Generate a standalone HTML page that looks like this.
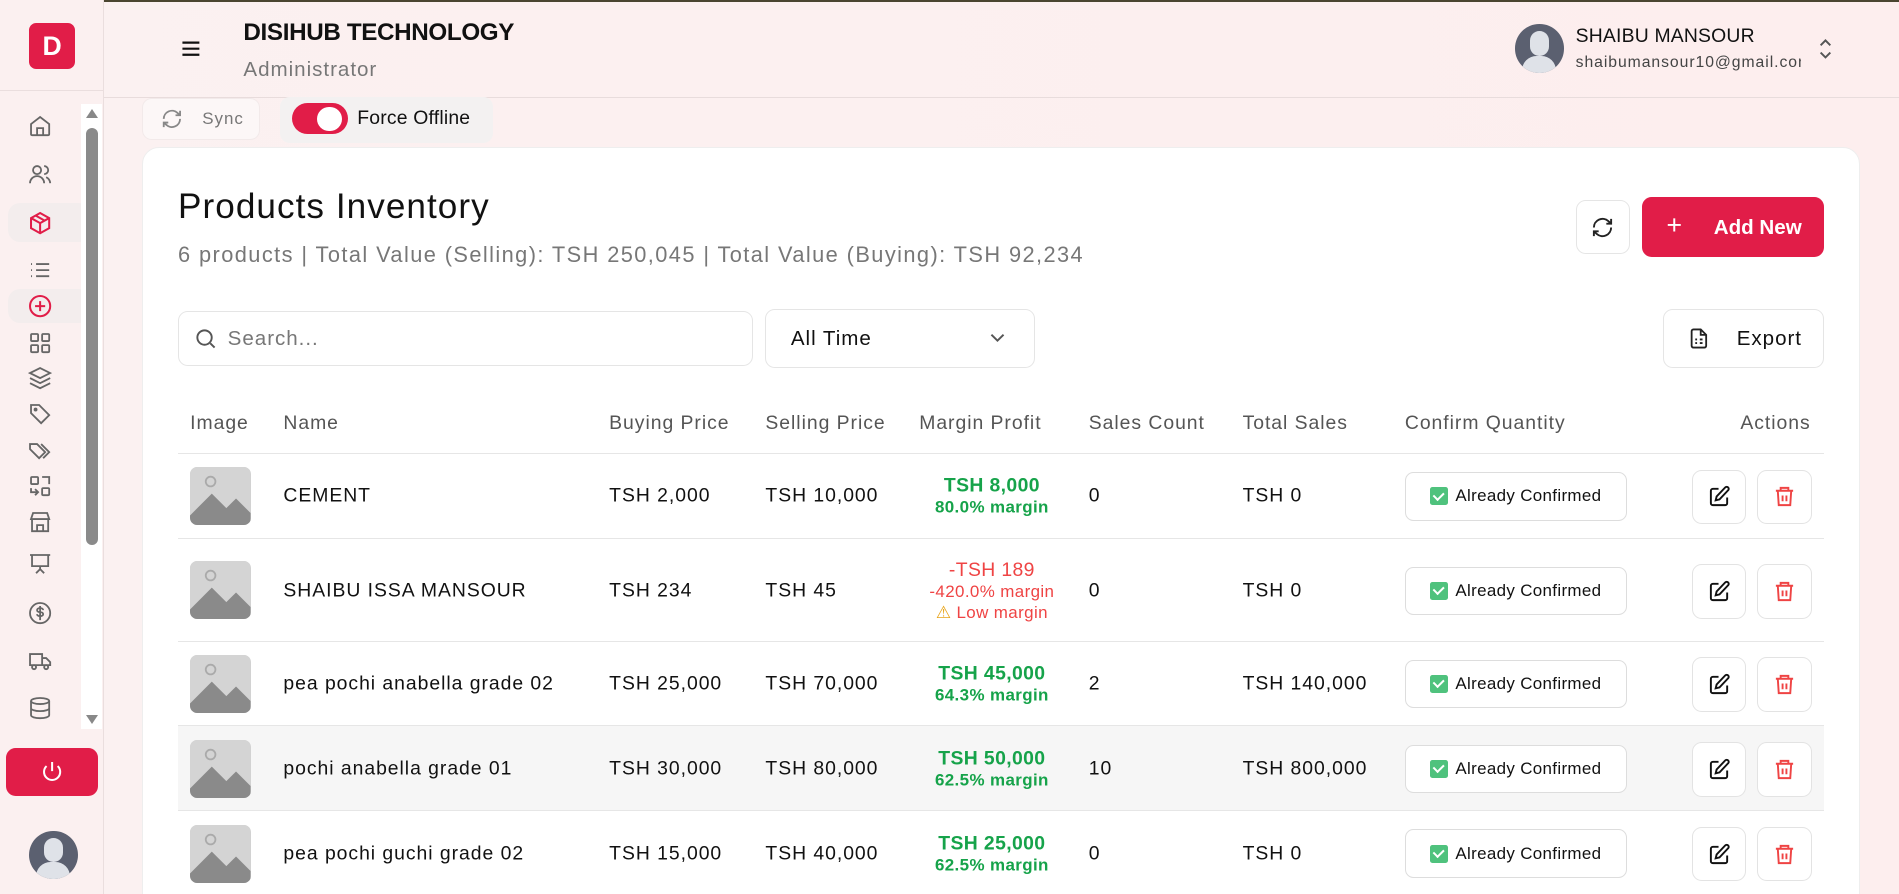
<!DOCTYPE html>
<html><head><meta charset="utf-8"><style>
*{box-sizing:border-box;margin:0;padding:0}
html,body{width:1899px;height:894px;overflow:hidden}
body{font-family:"Liberation Sans",sans-serif;color:#111;background:#fdf3f3;letter-spacing:0.05em}
#r{zoom:1.21110;width:1568px;height:738px;position:relative;overflow:hidden;background:linear-gradient(90deg,#fbf1f1,#fdeeee)}
.a{position:absolute}
.sb{left:0;top:0;width:86px;height:738px;border-right:1px solid #eadede;background:#fbf0f0}
.ic{position:absolute;left:23px;width:20px;height:20px}
svg{display:block}
.btn{position:absolute;background:#fff;border:1px solid #e5e5e5;border-radius:8px}
.th{position:absolute;top:340px;font-size:16px;color:#555}
.row{position:absolute;left:147px;width:1359px;border-top:1px solid #e6e6e6}
.c{position:absolute;font-size:16px;color:#111;transform:translateY(-50%)}
.img{position:absolute;left:10px;width:50px;height:48px;border-radius:6px;background:#d0d0d0;overflow:hidden}
.mg{position:absolute;left:560px;width:224px;text-align:center;transform:translateY(-50%);font-weight:bold;letter-spacing:0.02em}
.conf{position:absolute;left:1013px;width:183px;height:40px;border:1px solid #ddd;border-radius:7px;font-size:14px;display:flex;align-items:center;justify-content:center;gap:6px;background:#fff;letter-spacing:0.02em}
.ck{width:15px;height:15px;background:#4fc27d;border-radius:2px;position:relative}
.ck:after{content:"";position:absolute;left:4px;top:2px;width:4px;height:7px;border:solid #fff;border-width:0 2px 2px 0;transform:rotate(45deg)}
.ab{position:absolute;width:45px;height:45px;border:1px solid #e3e3e3;border-radius:8px;background:#fff;display:flex;align-items:center;justify-content:center}
</style></head><body><div id="r">
<div class="a" style="left:0;top:0;width:1568px;height:2px;background:#4a4530"></div>
<div class="a" style="left:86px;top:80px;width:1482px;height:1px;background:#e8dcdc"></div>
<div class="a sb">
<div class="a" style="left:24px;top:19px;width:38px;height:38px;background:#e11d48;border-radius:6px;color:#fff;font-weight:bold;font-size:22px;text-align:center;line-height:38px;letter-spacing:0">D</div>
<div class="a" style="left:0;top:74px;width:86px;height:1px;background:#eadede"></div>
<div class="a" style="left:7px;top:168px;width:68px;height:32px;background:#f3eded;border-radius:10px"></div>
<div class="a" style="left:7px;top:239px;width:68px;height:28px;background:#f3eded;border-radius:10px"></div>
<svg class="ic" style="top:94px" viewBox="0 0 24 24" fill="none" stroke="#666" stroke-width="1.8"><path d="M3 10l9-7 9 7v10a1 1 0 0 1-1 1H4a1 1 0 0 1-1-1z M9 21v-7h6v7"/></svg>
<svg class="ic" style="top:134px" viewBox="0 0 24 24" fill="none" stroke="#666" stroke-width="1.8"><circle cx="9" cy="8" r="4"/><path d="M2 21a7 7 0 0 1 14 0M16 4a4 4 0 0 1 0 8M22 21a7 7 0 0 0-4-6"/></svg>
<svg class="ic" style="top:174px" viewBox="0 0 24 24" fill="none" stroke="#e11d48" stroke-width="2"><path d="M12 2l9 5v10l-9 5-9-5V7z M3 7l9 5 9-5 M12 12v10 M7.5 4.5l9 5"/></svg>
<svg class="ic" style="top:213px" viewBox="0 0 24 24" fill="none" stroke="#666" stroke-width="1.8"><path d="M8 6h13M8 12h13M8 18h13M3 6h1M3 12h1M3 18h1"/></svg>
<svg class="ic" style="top:243px" viewBox="0 0 24 24" fill="none" stroke="#e11d48" stroke-width="2"><circle cx="12" cy="12" r="10"/><path d="M12 7v10M7 12h10"/></svg>
<svg class="ic" style="top:273px" viewBox="0 0 24 24" fill="none" stroke="#666" stroke-width="1.8"><rect x="3" y="3" width="7" height="7" rx="1"/><rect x="14" y="3" width="7" height="7" rx="1"/><rect x="3" y="14" width="7" height="7" rx="1"/><rect x="14" y="14" width="7" height="7" rx="1"/></svg>
<svg class="ic" style="top:302px" viewBox="0 0 24 24" fill="none" stroke="#666" stroke-width="1.8"><path d="M12 2l10 5-10 5L2 7z M2 12l10 5 10-5 M2 17l10 5 10-5"/></svg>
<svg class="ic" style="top:332px" viewBox="0 0 24 24" fill="none" stroke="#666" stroke-width="1.8"><path d="M3 3h8l10 10-8 8L3 11z"/><circle cx="7.5" cy="7.5" r="1"/></svg>
<svg class="ic" style="top:362px" viewBox="0 0 24 24" fill="none" stroke="#666" stroke-width="1.8"><path d="M2 6h7l8 8-6 6-9-9z M13 6l8 8-6 6"/></svg>
<svg class="ic" style="top:391px" viewBox="0 0 24 24" fill="none" stroke="#666" stroke-width="1.8"><rect x="3" y="3" width="7" height="7" rx="1"/><rect x="14" y="14" width="7" height="7" rx="1"/><path d="M14 3h7v7M3 14v4h7M7 21l3-3-3-3"/></svg>
<svg class="ic" style="top:421px" viewBox="0 0 24 24" fill="none" stroke="#666" stroke-width="1.8"><path d="M3 9l2-6h14l2 6z M4 9v12h16V9 M9 21v-6h6v6"/></svg>
<svg class="ic" style="top:456px" viewBox="0 0 24 24" fill="none" stroke="#666" stroke-width="1.8"><path d="M2 3h20M4 3v11h16V3M12 14v3M8 21l4-4 4 4"/></svg>
<svg class="ic" style="top:496px" viewBox="0 0 24 24" fill="none" stroke="#666" stroke-width="1.8"><circle cx="12" cy="12" r="10"/><path d="M15 9c0-1-1-2-3-2s-3 1-3 2 1 2 3 2 3 1 3 2-1 2-3 2-3-1-3-2M12 5v14"/></svg>
<svg class="ic" style="top:536px" viewBox="0 0 24 24" fill="none" stroke="#666" stroke-width="1.8"><path d="M2 5h12v11H2z M14 9h4l4 4v3h-8"/><circle cx="6" cy="18" r="2"/><circle cx="18" cy="18" r="2"/></svg>
<svg class="ic" style="top:575px" viewBox="0 0 24 24" fill="none" stroke="#666" stroke-width="1.8"><ellipse cx="12" cy="5" rx="9" ry="3"/><path d="M3 5v14c0 1.7 4 3 9 3s9-1.3 9-3V5M3 12c0 1.7 4 3 9 3s9-1.3 9-3"/></svg>
<div class="a" style="left:67px;top:86px;width:17px;height:516px;background:#fff"></div>
<div class="a" style="left:71px;top:90px;width:0;height:0;border-left:5px solid transparent;border-right:5px solid transparent;border-bottom:8px solid #888"></div>
<div class="a" style="left:71px;top:590px;width:0;height:0;border-left:5px solid transparent;border-right:5px solid transparent;border-top:8px solid #888"></div>
<div class="a" style="left:71px;top:106px;width:10px;height:344px;background:#8a8a8a;border-radius:5px"></div>
<div class="a" style="left:5px;top:618px;width:76px;height:39px;background:#e11d48;border-radius:8px"></div>
<svg class="a" style="left:33px;top:627px" width="20" height="20" viewBox="0 0 24 24" fill="none" stroke="#fff" stroke-width="2"><path d="M12 3v9M6.5 7a8 8 0 1 0 11 0"/></svg>
<div class="a" style="left:24px;top:686px;width:40px;height:40px;border-radius:50%;background:#5b6070;overflow:hidden"><div class="a" style="left:12px;top:6px;width:16px;height:20px;border-radius:8px;background:#dfe2e8"></div><div class="a" style="left:6px;top:26px;width:28px;height:20px;border-radius:12px 12px 0 0;background:#dfe2e8"></div></div>
</div>
<svg class="a" style="left:149px;top:32px" width="18" height="16" viewBox="0 0 18 16" stroke="#111" stroke-width="1.8"><path d="M2 3h14M2 8h14M2 13h14"/></svg>
<div class="a" style="left:201px;top:16px;font-size:20px;font-weight:bold;letter-spacing:-0.3px">DISIHUB TECHNOLOGY</div>
<div class="a" style="left:201px;top:48px;font-size:17px;color:#777">Administrator</div>
<div class="a" style="left:1251px;top:20px;width:40px;height:40px;border-radius:50%;background:#5b6070;overflow:hidden"><div class="a" style="left:12px;top:6px;width:16px;height:20px;border-radius:8px;background:#dfe2e8"></div><div class="a" style="left:6px;top:26px;width:28px;height:20px;border-radius:12px 12px 0 0;background:#dfe2e8"></div></div>
<div class="a" style="left:1301px;top:21px;font-size:16px;letter-spacing:0.01em">SHAIBU MANSOUR</div>
<div class="a" style="left:1301px;top:45px;font-size:13px;color:#444;width:186px;overflow:hidden;white-space:nowrap;letter-spacing:0.06em">shaibumansour10@gmail.com</div>
<svg class="a" style="left:1500px;top:31px" width="14" height="18" viewBox="0 0 14 18" fill="none" stroke="#555" stroke-width="1.6"><path d="M3 6l4-4 4 4M3 12l4 4 4-4"/></svg>
<div class="a" style="left:117px;top:81px;width:98px;height:35px;background:#fcf7f7;border-radius:8px;border:1px solid #f2eaea"></div>
<svg class="a" style="left:133px;top:89px" width="18" height="18" viewBox="0 0 24 24" fill="none" stroke="#888" stroke-width="2"><path d="M21 12a9 9 0 0 1-15 6.7L3 16M3 12a9 9 0 0 1 15-6.7L21 8M21 3v5h-5M3 21v-5h5"/></svg>
<div class="a" style="left:167px;top:90px;font-size:14px;color:#777">Sync</div>
<div class="a" style="left:231px;top:80px;width:176px;height:38px;background:#f3f1f1;border-radius:8px"></div>
<div class="a" style="left:241px;top:85px;width:46px;height:26px;background:#e11d48;border-radius:13px"><div class="a" style="left:21px;top:3px;width:20px;height:20px;border-radius:50%;background:#fff"></div></div>
<div class="a" style="left:295px;top:88px;font-size:16px;letter-spacing:0.01em">Force Offline</div>
<div class="a" style="left:117px;top:121px;width:1419px;height:640px;background:#fff;border-radius:14px;border:1px solid #eee"></div>
<div class="a" style="left:147px;top:154px;font-size:29px;letter-spacing:0.03em">Products Inventory</div>
<div class="a" style="left:147px;top:200px;font-size:18px;color:#777;letter-spacing:0.065em">6 products | Total Value (Selling): TSH 250,045 | Total Value (Buying): TSH 92,234</div>
<div class="btn" style="left:1301px;top:165px;width:45px;height:45px"></div>
<svg class="a" style="left:1314px;top:178px" width="19" height="19" viewBox="0 0 24 24" fill="none" stroke="#222" stroke-width="2"><path d="M21 12a9 9 0 0 1-15 6.7L3 16M3 12a9 9 0 0 1 15-6.7L21 8M21 3v5h-5M3 21v-5h5"/></svg>
<div class="a" style="left:1356px;top:163px;width:150px;height:49px;background:#e11d48;border-radius:8px;color:#fff;font-size:17px;font-weight:bold;letter-spacing:0"><span class="a" style="left:20px;top:10px;font-size:22px;font-weight:normal">+</span><span class="a" style="left:59px;top:15px">Add New</span></div>
<div class="btn" style="left:147px;top:257px;width:475px;height:45px"></div>
<svg class="a" style="left:160px;top:270px" width="19" height="19" viewBox="0 0 24 24" fill="none" stroke="#555" stroke-width="2"><circle cx="11" cy="11" r="7.5"/><path d="M17 17l4.5 4.5"/></svg>
<div class="a" style="left:188px;top:270px;font-size:17px;color:#777">Search...</div>
<div class="btn" style="left:632px;top:255px;width:223px;height:49px"></div>
<div class="a" style="left:653px;top:270px;font-size:17px">All Time</div>
<svg class="a" style="left:817px;top:273px" width="14" height="10" viewBox="0 0 14 10" fill="none" stroke="#555" stroke-width="1.6"><path d="M2 3l5 5 5-5"/></svg>
<div class="btn" style="left:1373px;top:255px;width:133px;height:49px"></div>
<svg class="a" style="left:1394px;top:270px" width="18" height="19" viewBox="0 0 24 24" fill="none" stroke="#222" stroke-width="2"><path d="M14 2H6a2 2 0 0 0-2 2v16a2 2 0 0 0 2 2h12a2 2 0 0 0 2-2V8z M14 2v6h6 M8 13h2M8 17h2M13 13h3M13 17h3"/></svg>
<div class="a" style="left:1434px;top:270px;font-size:17px">Export</div>
<div class="th" style="left:157px">Image</div><div class="th" style="left:234px">Name</div><div class="th" style="left:503px">Buying Price</div><div class="th" style="left:632px">Selling Price</div><div class="th" style="left:759px">Margin Profit</div><div class="th" style="left:899px">Sales Count</div><div class="th" style="left:1026px">Total Sales</div><div class="th" style="left:1160px">Confirm Quantity</div><div class="th" style="left:1437px">Actions</div>

<div class="row" style="top:374px;height:70px">
<div class="img" style="top:11px"><svg width="50" height="48" viewBox="0 0 50 48"><rect width="50" height="48" fill="#d4d4d4"/><circle cx="17" cy="12" r="4" fill="none" stroke="#aaa" stroke-width="1.5"/><path d="M0 40l18-18 12 12 8-8 12 12v10H0z" fill="#8a8a8a"/></svg></div>
<div class="c" style="left:87px;top:35px">CEMENT</div><div class="c" style="left:356px;top:35px">TSH 2,000</div><div class="c" style="left:485px;top:35px">TSH 10,000</div>
<div class="mg" style="top:35px;color:#16a34a"><div style="font-size:16px">TSH 8,000</div><div style="font-size:14px">80.0% margin</div></div>
<div class="c" style="left:752px;top:35px">0</div><div class="c" style="left:879px;top:35px">TSH 0</div>
<div class="conf" style="top:15px"><div class="ck"></div>Already Confirmed</div>
<div class="ab" style="left:1250px;top:13px"><svg width="19" height="19" viewBox="0 0 24 24" fill="none" stroke="#111" stroke-width="2"><path d="M11 4H5a2 2 0 0 0-2 2v13a2 2 0 0 0 2 2h13a2 2 0 0 0 2-2v-6M18 2.5a2.1 2.1 0 0 1 3 3L12 15l-4 1 1-4z"/></svg></div>
<div class="ab" style="left:1304px;top:13px"><svg width="19" height="19" viewBox="0 0 24 24" fill="none" stroke="#ef4444" stroke-width="2"><path d="M3 6h18M8 6V3h8v3M5 6l1 15h12l1-15M10 11v6M14 11v6"/></svg></div>
</div>
<div class="row" style="top:444px;height:85px">
<div class="img" style="top:18px"><svg width="50" height="48" viewBox="0 0 50 48"><rect width="50" height="48" fill="#d4d4d4"/><circle cx="17" cy="12" r="4" fill="none" stroke="#aaa" stroke-width="1.5"/><path d="M0 40l18-18 12 12 8-8 12 12v10H0z" fill="#8a8a8a"/></svg></div>
<div class="c" style="left:87px;top:43px">SHAIBU ISSA MANSOUR</div><div class="c" style="left:356px;top:43px">TSH 234</div><div class="c" style="left:485px;top:43px">TSH 45</div>
<div class="mg" style="top:43px;color:#ef4444"><div style="font-size:16px;font-weight:normal">-TSH 189</div><div style="font-size:14px;font-weight:normal">-420.0% margin</div><div style="font-size:14px;font-weight:normal"><span style="color:#e8a317">⚠</span> Low margin</div></div>
<div class="c" style="left:752px;top:43px">0</div><div class="c" style="left:879px;top:43px">TSH 0</div>
<div class="conf" style="top:23px"><div class="ck"></div>Already Confirmed</div>
<div class="ab" style="left:1250px;top:21px"><svg width="19" height="19" viewBox="0 0 24 24" fill="none" stroke="#111" stroke-width="2"><path d="M11 4H5a2 2 0 0 0-2 2v13a2 2 0 0 0 2 2h13a2 2 0 0 0 2-2v-6M18 2.5a2.1 2.1 0 0 1 3 3L12 15l-4 1 1-4z"/></svg></div>
<div class="ab" style="left:1304px;top:21px"><svg width="19" height="19" viewBox="0 0 24 24" fill="none" stroke="#ef4444" stroke-width="2"><path d="M3 6h18M8 6V3h8v3M5 6l1 15h12l1-15M10 11v6M14 11v6"/></svg></div>
</div>
<div class="row" style="top:529px;height:70px">
<div class="img" style="top:11px"><svg width="50" height="48" viewBox="0 0 50 48"><rect width="50" height="48" fill="#d4d4d4"/><circle cx="17" cy="12" r="4" fill="none" stroke="#aaa" stroke-width="1.5"/><path d="M0 40l18-18 12 12 8-8 12 12v10H0z" fill="#8a8a8a"/></svg></div>
<div class="c" style="left:87px;top:35px">pea pochi anabella grade 02</div><div class="c" style="left:356px;top:35px">TSH 25,000</div><div class="c" style="left:485px;top:35px">TSH 70,000</div>
<div class="mg" style="top:35px;color:#16a34a"><div style="font-size:16px">TSH 45,000</div><div style="font-size:14px">64.3% margin</div></div>
<div class="c" style="left:752px;top:35px">2</div><div class="c" style="left:879px;top:35px">TSH 140,000</div>
<div class="conf" style="top:15px"><div class="ck"></div>Already Confirmed</div>
<div class="ab" style="left:1250px;top:13px"><svg width="19" height="19" viewBox="0 0 24 24" fill="none" stroke="#111" stroke-width="2"><path d="M11 4H5a2 2 0 0 0-2 2v13a2 2 0 0 0 2 2h13a2 2 0 0 0 2-2v-6M18 2.5a2.1 2.1 0 0 1 3 3L12 15l-4 1 1-4z"/></svg></div>
<div class="ab" style="left:1304px;top:13px"><svg width="19" height="19" viewBox="0 0 24 24" fill="none" stroke="#ef4444" stroke-width="2"><path d="M3 6h18M8 6V3h8v3M5 6l1 15h12l1-15M10 11v6M14 11v6"/></svg></div>
</div>
<div class="row" style="top:599px;height:70px;background:#f6f6f6">
<div class="img" style="top:11px"><svg width="50" height="48" viewBox="0 0 50 48"><rect width="50" height="48" fill="#d4d4d4"/><circle cx="17" cy="12" r="4" fill="none" stroke="#aaa" stroke-width="1.5"/><path d="M0 40l18-18 12 12 8-8 12 12v10H0z" fill="#8a8a8a"/></svg></div>
<div class="c" style="left:87px;top:35px">pochi anabella grade 01</div><div class="c" style="left:356px;top:35px">TSH 30,000</div><div class="c" style="left:485px;top:35px">TSH 80,000</div>
<div class="mg" style="top:35px;color:#16a34a"><div style="font-size:16px">TSH 50,000</div><div style="font-size:14px">62.5% margin</div></div>
<div class="c" style="left:752px;top:35px">10</div><div class="c" style="left:879px;top:35px">TSH 800,000</div>
<div class="conf" style="top:15px"><div class="ck"></div>Already Confirmed</div>
<div class="ab" style="left:1250px;top:13px"><svg width="19" height="19" viewBox="0 0 24 24" fill="none" stroke="#111" stroke-width="2"><path d="M11 4H5a2 2 0 0 0-2 2v13a2 2 0 0 0 2 2h13a2 2 0 0 0 2-2v-6M18 2.5a2.1 2.1 0 0 1 3 3L12 15l-4 1 1-4z"/></svg></div>
<div class="ab" style="left:1304px;top:13px"><svg width="19" height="19" viewBox="0 0 24 24" fill="none" stroke="#ef4444" stroke-width="2"><path d="M3 6h18M8 6V3h8v3M5 6l1 15h12l1-15M10 11v6M14 11v6"/></svg></div>
</div>
<div class="row" style="top:669px;height:70px">
<div class="img" style="top:11px"><svg width="50" height="48" viewBox="0 0 50 48"><rect width="50" height="48" fill="#d4d4d4"/><circle cx="17" cy="12" r="4" fill="none" stroke="#aaa" stroke-width="1.5"/><path d="M0 40l18-18 12 12 8-8 12 12v10H0z" fill="#8a8a8a"/></svg></div>
<div class="c" style="left:87px;top:35px">pea pochi guchi grade 02</div><div class="c" style="left:356px;top:35px">TSH 15,000</div><div class="c" style="left:485px;top:35px">TSH 40,000</div>
<div class="mg" style="top:35px;color:#16a34a"><div style="font-size:16px">TSH 25,000</div><div style="font-size:14px">62.5% margin</div></div>
<div class="c" style="left:752px;top:35px">0</div><div class="c" style="left:879px;top:35px">TSH 0</div>
<div class="conf" style="top:15px"><div class="ck"></div>Already Confirmed</div>
<div class="ab" style="left:1250px;top:13px"><svg width="19" height="19" viewBox="0 0 24 24" fill="none" stroke="#111" stroke-width="2"><path d="M11 4H5a2 2 0 0 0-2 2v13a2 2 0 0 0 2 2h13a2 2 0 0 0 2-2v-6M18 2.5a2.1 2.1 0 0 1 3 3L12 15l-4 1 1-4z"/></svg></div>
<div class="ab" style="left:1304px;top:13px"><svg width="19" height="19" viewBox="0 0 24 24" fill="none" stroke="#ef4444" stroke-width="2"><path d="M3 6h18M8 6V3h8v3M5 6l1 15h12l1-15M10 11v6M14 11v6"/></svg></div>
</div>
</div></body></html>
